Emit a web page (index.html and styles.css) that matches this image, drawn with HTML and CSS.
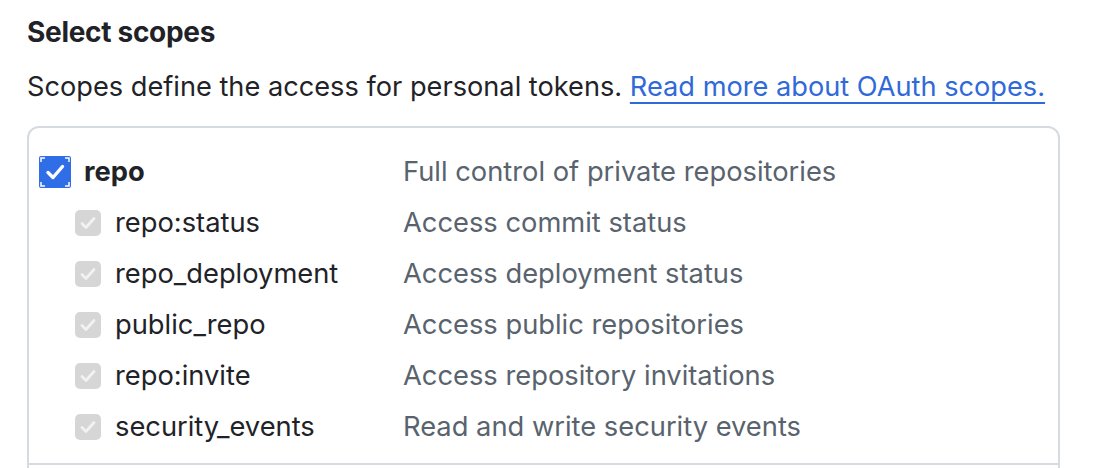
FILE: index.html
```html
<!DOCTYPE html>
<html>
<head>
<meta charset="utf-8">
<link rel="stylesheet" href="styles.css">
</head>
<body>
<div class="page">
  <h3 class="title">Select scopes</h3>
  <p class="intro">Scopes define the access for personal tokens. <a href="#" class="link">Read more about OAuth scopes.</a></p>
  <div class="box">
    <div class="group">
      <div class="row main">
        <div class="name">
          <span class="cb cb-on">
            <svg viewBox="0 0 32 32" width="32" height="32">
              <path d="M2 6V2h4M26 2h4v4M30 26v4h-4M6 30H2v-4" fill="none" stroke="#fff" stroke-width="1.5"/>
              <path d="M9 16.5l5 5 9.5-11" fill="none" stroke="#fff" stroke-width="3.4" stroke-linecap="round" stroke-linejoin="round"/>
            </svg>
          </span>
          <span class="label strong">repo</span>
        </div>
        <div class="desc">Full control of private repositories</div>
      </div>
      <div class="row sub">
        <div class="name"><span class="cb cb-dis"><svg viewBox="0 0 26 26" width="26" height="26"><path d="M7 13.5l4 4 8-9" fill="none" stroke="#f2f2f2" stroke-width="2.8" stroke-linecap="round" stroke-linejoin="round"/></svg></span><span class="label">repo:status</span></div>
        <div class="desc">Access commit status</div>
      </div>
      <div class="row sub">
        <div class="name"><span class="cb cb-dis"><svg viewBox="0 0 26 26" width="26" height="26"><path d="M7 13.5l4 4 8-9" fill="none" stroke="#f2f2f2" stroke-width="2.8" stroke-linecap="round" stroke-linejoin="round"/></svg></span><span class="label">repo_deployment</span></div>
        <div class="desc">Access deployment status</div>
      </div>
      <div class="row sub">
        <div class="name"><span class="cb cb-dis"><svg viewBox="0 0 26 26" width="26" height="26"><path d="M7 13.5l4 4 8-9" fill="none" stroke="#f2f2f2" stroke-width="2.8" stroke-linecap="round" stroke-linejoin="round"/></svg></span><span class="label">public_repo</span></div>
        <div class="desc">Access public repositories</div>
      </div>
      <div class="row sub">
        <div class="name"><span class="cb cb-dis"><svg viewBox="0 0 26 26" width="26" height="26"><path d="M7 13.5l4 4 8-9" fill="none" stroke="#f2f2f2" stroke-width="2.8" stroke-linecap="round" stroke-linejoin="round"/></svg></span><span class="label">repo:invite</span></div>
        <div class="desc">Access repository invitations</div>
      </div>
      <div class="row sub">
        <div class="name"><span class="cb cb-dis"><svg viewBox="0 0 26 26" width="26" height="26"><path d="M7 13.5l4 4 8-9" fill="none" stroke="#f2f2f2" stroke-width="2.8" stroke-linecap="round" stroke-linejoin="round"/></svg></span><span class="label">security_events</span></div>
        <div class="desc">Read and write security events</div>
      </div>
    </div>
    <div class="group next"></div>
  </div>
</div>
</body>
</html>
```

FILE: styles.css
```css
html, body {
  margin: 0;
  padding: 0;
  background: #ffffff;
}
body {
  font-family: Inter, "Noto Sans", sans-serif;
  color: #1f2328;
}
.page {
  padding: 16px 0 0 27px;
  width: 1033px;
}
.title {
  margin: 0;
  font-size: 28px;
  line-height: 32px;
  font-weight: 700;
  letter-spacing: -0.3px;
}
.intro {
  margin: 22px 0 0;
  font-size: 27.2px;
  line-height: 34px;
  letter-spacing: 0;
}
.link {
  color: #2f6ad8;
  text-decoration: underline;
  text-decoration-thickness: 2px;
  text-underline-offset: 6px;
}
.box {
  margin-top: 22px;
  border: 2px solid #d5dbe1;
  border-radius: 12px;
  height: 360px;
  box-sizing: border-box;
  overflow: hidden;
}
.group {
  padding: 18px 0 11px 0;
}
.group.next {
  border-top: 2px solid #d5dbe1;
}
.row {
  display: flex;
  align-items: center;
  height: 51px;
  font-size: 27.3px;
}
.name {
  display: flex;
  align-items: center;
  flex-shrink: 0;
}
.main .name { padding-left: 10px; width: 364px; }
.sub .name { padding-left: 46px; width: 328px; }
.cb {
  display: inline-flex;
  flex-shrink: 0;
}
.cb-on {
  width: 32px;
  height: 32px;
  background: #2f6ee6;
  border-radius: 2px;
  margin-right: 13px;
}
.cb-dis {
  width: 26px;
  height: 26px;
  background: #d6d6d6;
  border-radius: 5px;
  margin-right: 14px;
}
.label {
  color: #1f2328;
}
.strong {
  font-weight: 700;
}
.desc {
  color: #59636e;
}
```
